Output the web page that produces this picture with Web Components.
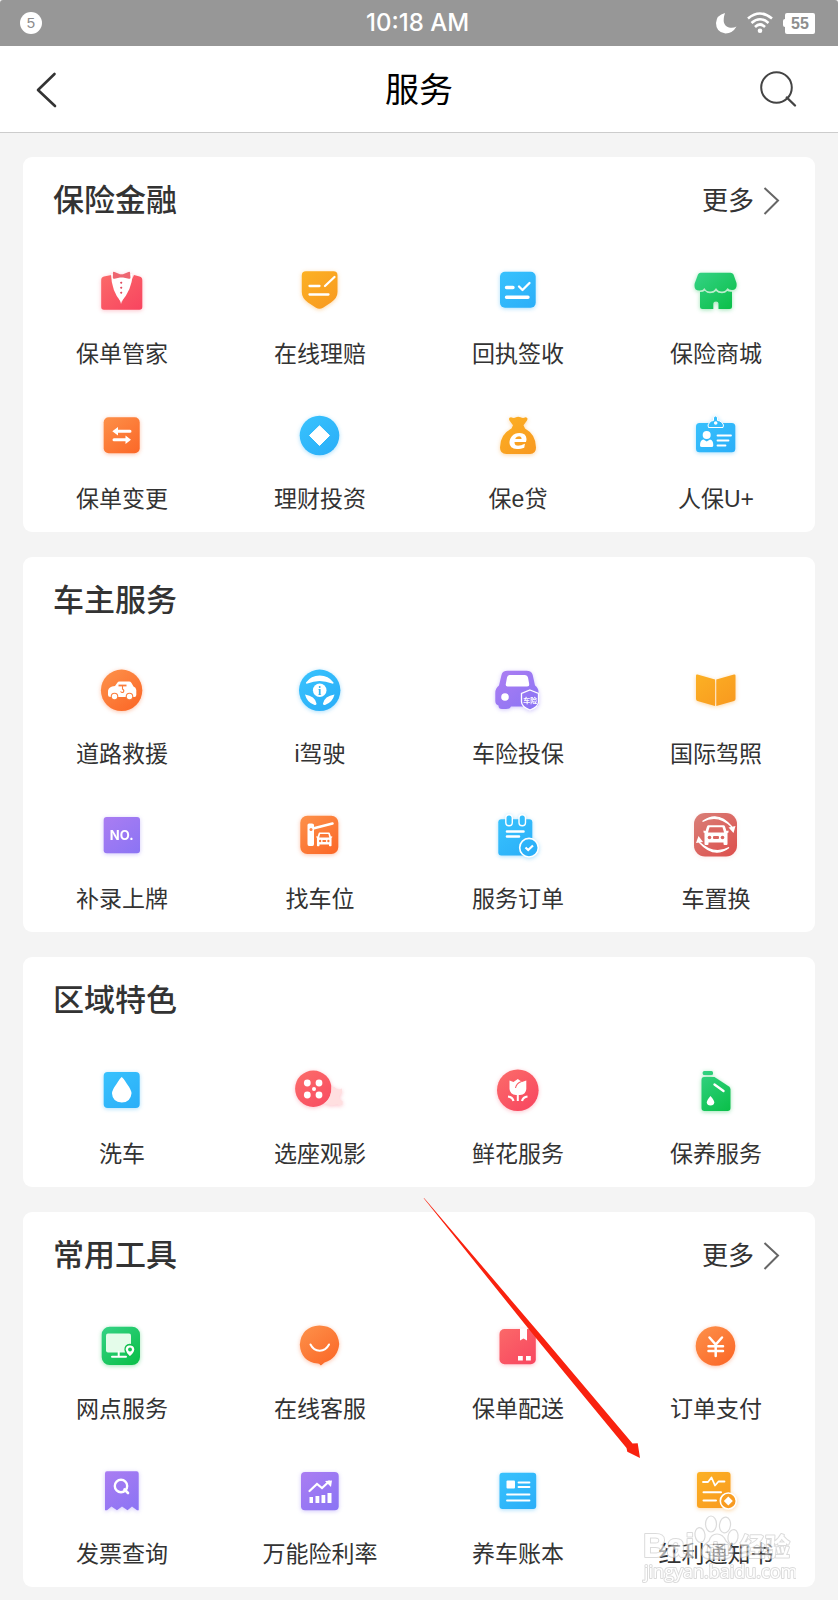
<!DOCTYPE html>
<html lang="zh-CN">
<head>
<meta charset="utf-8">
<meta name="viewport" content="width=device-width, initial-scale=1">
<title>服务</title>
<style>
  body {
    margin: 0;
    min-height: 100vh;
    background: #f4f4f4;
    color: #333;
    font-family: "Liberation Sans", "Noto Sans CJK SC", sans-serif;
  }
</style>
</head>
<body>
<service-page>
  <status-bar slot="status" time="10:18 AM" notices="5" battery="55"></status-bar>
  <nav-header slot="nav">服务</nav-header>

  <service-card heading="保险金融" more>
    <service-item icon="shirt">保单管家</service-item>
    <service-item icon="shield">在线理赔</service-item>
    <service-item icon="receipt">回执签收</service-item>
    <service-item icon="store">保险商城</service-item>
    <service-item icon="exchange">保单变更</service-item>
    <service-item icon="diamond">理财投资</service-item>
    <service-item icon="bag">保e贷</service-item>
    <service-item icon="badge">人保U+</service-item>
  </service-card>

  <service-card heading="车主服务">
    <service-item icon="rescue">道路救援</service-item>
    <service-item icon="wheel">i驾驶</service-item>
    <service-item icon="carshield">车险投保</service-item>
    <service-item icon="book">国际驾照</service-item>
    <service-item icon="plate">补录上牌</service-item>
    <service-item icon="parking">找车位</service-item>
    <service-item icon="order">服务订单</service-item>
    <service-item icon="swap">车置换</service-item>
  </service-card>

  <service-card heading="区域特色">
    <service-item icon="wash">洗车</service-item>
    <service-item icon="reel">选座观影</service-item>
    <service-item icon="flower">鲜花服务</service-item>
    <service-item icon="oil">保养服务</service-item>
  </service-card>

  <service-card heading="常用工具" more>
    <service-item icon="branch">网点服务</service-item>
    <service-item icon="smile">在线客服</service-item>
    <service-item icon="delivery">保单配送</service-item>
    <service-item icon="yen">订单支付</service-item>
    <service-item icon="invoice">发票查询</service-item>
    <service-item icon="chart">万能险利率</service-item>
    <service-item icon="ledger">养车账本</service-item>
    <service-item icon="dividend">红利通知书</service-item>
    <pointer-arrow slot="overlay"></pointer-arrow>
    <water-mark slot="overlay"></water-mark>
  </service-card>
</service-page>

<script>
const define = (name, html, fill) => customElements.define(name, class extends HTMLElement {
  constructor() {
    super();
    const template = document.createElement('template');
    template.innerHTML = html;
    this.attachShadow({ mode: 'open' }).append(template.content.cloneNode(true));
  }
  connectedCallback() { if (fill) fill(this, this.shadowRoot); }
});

/* Colour pairs: gradient start, gradient end, glow */
const HUES = {
  red: ['#fb6a69', '#f84660', '#f8466055'],
  yellow: ['#fcb124', '#f8981f', '#f8981f66'],
  blue: ['#38c2fd', '#2aaef8', '#2aaef866'],
  green: ['#34d284', '#0abf48', '#0abf4866'],
  orange: ['#fd9049', '#fb6727', '#fb672766'],
  purple: ['#aa7df2', '#8b74f4', '#8b74f466'],
  brick: ['#d97b74', '#dd524f', '#dd524f22']
};

/* Glyphs on a 60 by 60 grid; G is the icon's gradient */
const G = 'url(#g)';
const square = (x, y, w, h, r) => `<rect x="${x}" y="${y}" width="${w}" height="${h}" rx="${r}" fill="${G}"/>`;
const frontCar = (x, y, w, h, fg, bg) => `
  <svg x="${x}" y="${y}" width="${w}" height="${h}" viewBox="0 0 26 21" preserveAspectRatio="none">
    <path d="M5.500 0.800H20.500Q21.500 0.800 22 2L23.500 6.500L25.500 6V8L24.500 8.500V19.500Q24.500 20.500 23.500 20.500H21.500Q20.500 20.500 20.500 19.500V18H5.500V19.500Q5.500 20.500 4.500 20.500H2.500Q1.500 20.500 1.500 19.500V8.500L0.500 8V6L2.500 6.500L4 2Q4.500 0.800 5.500 0.800Z" fill="${fg}"/>
    <path d="M6.500 2.800H19.500L21 8H5Z" fill="${bg}"/>
    <circle cx="6.500" cy="13" r="1.800" fill="${bg}"/><circle cx="19.500" cy="13" r="1.800" fill="${bg}"/>
    <rect x="10" y="11.500" width="6" height="3" rx="1" fill="${bg}"/>
  </svg>`;

const ICONS = {
  shirt: ['red', `
    <path d="M12 16.500L19.500 15L29 44L42 15L47.500 16.500Q50.300 17.300 50.300 20V47Q50.300 49.800 47.500 49.800H12Q9.200 49.800 9.200 47V20Q9.200 17.200 12 16.500Z" fill="${G}"/>
    <path d="M19 14L40.500 14Q40 30 29 42Q19.500 31 19 14Z" fill="#fff"/>
    <path d="M21 12.500Q21 11.500 22.500 12L28 14.200H31L36.500 12Q38 11.500 38 12.500L38.500 17.500Q38.500 19.200 37 18.700L31 17.500H28L22.500 18.700Q20.800 19 20.800 17.500Z" fill="#ee6570"/>
    <path d="M29.200 21.500l1.300 1.300-1.300 1.300-1.300-1.300zM29.200 26.500l1.300 1.300-1.300 1.300-1.300-1.300zM29.200 31.500l1.300 1.300-1.300 1.300-1.300-1.300z" fill="#e0455a"/>`],
  shield: ['yellow', `
    <path d="M16 11.300H43.500Q47.500 11.300 47.500 15.500V32Q47.500 38 41 42.500L33 47.700Q29.500 50 26 47.700L18 42.500Q11.800 38 11.800 32V15.500Q11.800 11.300 16 11.300Z" fill="${G}"/>
    <path d="M19.500 26H29.500M35 26L44.500 17M19.500 34.500H38.500" stroke="#fff" stroke-width="2.300" stroke-linecap="round"/>`],
  receipt: ['blue', square(12, 11.7, 35.7, 36, 5) + `
    <path d="M18.500 27.500H25M18.500 37.300H40" stroke="#fff" stroke-width="3.400" stroke-linecap="round"/>
    <path d="M31 26.500L34.500 30L41.500 23" fill="none" stroke="#fff" stroke-width="2.300" stroke-linecap="round" stroke-linejoin="round"/>`],
  store: ['green', `
    <path d="M14.500 12.800H44.500Q46.500 12.800 47.500 14.500L50.500 23Q51.500 30 46 30Q43 30 41.500 28Q39.500 31.500 36 31.500Q32 31.500 30 28Q28 31.500 24 31.500Q20 31.500 18.500 28Q17 30.500 13.500 30.500Q7.500 30.500 8.700 23.500L12 14.500Q12.800 12.800 14.500 12.800Z" fill="${G}"/>
    <path d="M14 32Q17.500 32 18.800 30.800Q21 33.300 24 33.300Q28 33.300 30 31Q32 33.300 36 33.300Q39.500 33.300 41.200 31Q43 32 46 31.700V46.500Q46 49 43.500 49H32.500V43.500Q32.500 41.500 30 41.500Q27.300 41.500 27.300 43.500V49H16.500Q14 49 14 46.500Z" fill="${G}"/>`],
  exchange: ['orange', square(11.7, 12.3, 36, 36, 5) + `
    <path d="M24.500 26.300H38M22 34.700H35" stroke="#fff" stroke-width="3"  stroke-linecap="round"/>
    <path d="M20.300 26.300L26 22V30.500ZM39 34.700L33.500 30.500V39Z" fill="#fff"/>`],
  diamond: ['blue', `<circle cx="29.500" cy="30.500" r="19.800" fill="${G}"/><path d="M29.500 20.800L39.500 30.500L29.500 40.500L19.500 30.500Z" fill="#fff" stroke="#fff" stroke-linejoin="round"/>`],
  bag: ['yellow', `
    <path d="M23 12.300Q26 13.800 28 12.300Q30 11 32.500 12.300Q35 13.500 37.500 12.300Q40.500 12.500 39 15.500L35.500 20.200L37 23.500Q48 29.500 48 42.500Q48 49 42 49H18.500Q12 49 12 42.500Q12 29.500 23.500 23.500L25 20.200L21.500 15.500Q20 12.500 23 12.300Z" fill="${G}"/>
    <text x="30" y="44" font-family="DejaVu Sans" font-size="28" font-weight="700" font-style="italic" text-anchor="middle" fill="#fff">e</text>`],
  badge: ['blue', square(10, 18, 39.300, 29.300, 3.5) + `
    <path d="M22.500 22.500Q21 20 23.500 17.500Q25.500 15.500 27.500 15.500V13Q27.500 11 29.500 11Q31.500 11 31.500 13V15.500Q34 15.500 36 17.500Q38.500 20 37 22.500Z" fill="${G}" stroke="#fff" stroke-width="1"/>
    <circle cx="29.700" cy="18" r="1.800" fill="#fff"/><circle cx="20.700" cy="30" r="4" fill="#fff"/>
    <path d="M14 40.500Q14 35 17.500 34.500L20.700 36.500L24 34.500Q27.300 35 27.300 40.500Q27.300 42 25.500 42H16Q14 42 14 40.500Z" fill="#fff"/>
    <path d="M31.500 30.500H45M31.500 35.500H42.500M31.500 40.500H39.500" stroke="#fff" stroke-width="1.800" stroke-linecap="round"/>`],
  rescue: ['orange', `<circle cx="29.600" cy="30.300" r="20.700" fill="${G}"/>
    <path d="M16 32.500Q15.500 28 20 26.500L23 26L25.500 22.500Q26 21.600 27.500 21.600H37Q38.500 21.600 39.500 23L41.500 26.500Q44 27 44.300 30V35Q44.300 37 42.500 37H18.500Q16 37 16 35Z" fill="#fff"/>
    <circle cx="22.500" cy="36.500" r="3.800" fill="#fb7d3b"/><circle cx="22.500" cy="36.500" r="2.700" fill="#fff"/>
    <circle cx="37.500" cy="36.500" r="3.800" fill="#fb7d3b"/><circle cx="37.500" cy="36.500" r="2.700" fill="#fff"/>
    <path d="M26.500 25.500H34.500" stroke="#fb7d3b" stroke-width="1.800"/>
    <path d="M30.500 26V29Q32.500 30 31.500 32Q30 33.200 28.500 31.500" fill="none" stroke="#fb7d3b" stroke-width="1.100"/>`],
  wheel: ['blue', `<circle cx="29.700" cy="30.300" r="20.700" fill="${G}"/>
    <path d="M16 22.500Q21 15.500 29.700 15.500Q38.500 15.500 43.500 22.500Q44 24 42 23.500Q29.500 18.500 17.500 23.500Q15.500 24 16 22.500Z" fill="#fff"/>
    <path d="M15 34.500Q25 36 26.500 43.500Q26.500 45.500 24.500 45Q17 42.500 15 34.500ZM44.500 34.500Q34.500 36 33 43.500Q33 45.500 35 45Q42.500 42.500 44.500 34.500Z" fill="#fff"/>
    <circle cx="29.700" cy="30.300" r="6.800" fill="#fff"/>
    <text x="29.700" y="34.500" font-family="Liberation Serif" font-size="12" font-weight="700" text-anchor="middle" fill="#32b4ee">i</text>`],
  carshield: ['purple', `
    <path d="M19.500 10.800H38.500Q43.500 10.800 44.700 15L47 25.500Q50.500 28 50.500 32V44Q50.500 46.500 46 46.500H23Q22 49 18 49H14Q10.500 49 10.500 45.500Q7.300 44.500 7.300 41V33Q7.300 28 11 25.500L13.500 15Q14.500 10.800 19.500 10.800Z" fill="${G}"/>
    <path d="M21.500 15H37Q39.500 15 40 17.500L41.200 24Q41.500 26.500 39 26.500H19.500Q17.300 26.500 17.800 24L19 17.500Q19.500 15 21.500 15Z" fill="#fff"/>
    <circle cx="17" cy="37" r="3.800" fill="#fff"/>
    <path d="M42 30L50.500 33.500V42Q50.500 46.500 42 50Q33.500 46.500 33.500 42V33.500Z" fill="${G}" stroke="#fff" stroke-width="1.300"/>
    <text x="42.300" y="42.500" font-family="Noto Sans CJK SC" font-size="7" font-weight="700" text-anchor="middle" fill="#fff">车险</text>`],
  book: ['yellow', `<path d="M11.500 14.500L29 19.500V46L11.500 41Q10 40.500 10 39V15.500Q10 14 11.500 14.500ZM48 14.500L30.300 19.500V46L48 41Q49.500 40.500 49.500 39V15.500Q49.500 14 48 14.500Z" fill="${G}"/>`],
  plate: ['purple', square(11.7, 12, 36.3, 36.3, 3) + `
    <text x="29.700" y="35" font-family="Inter" font-size="13" font-weight="700" text-anchor="middle" fill="#fff">NO.</text>`],
  parking: ['orange', square(10.3, 10.7, 38, 38.3, 7) + `
    <path d="M17.500 20Q17.500 18.500 19 18.500H22Q24 18.500 24 20V39Q24 41 22.500 41H19Q17.500 41 17.500 39Z" fill="#fff"/>
    <path d="M21 24L42.500 18.500" stroke="#fff" stroke-width="2.600" stroke-linecap="round"/>
    <circle cx="21" cy="24.500" r="1.500" fill="#fd8748"/>` + frontCar(26, 27, 16.500, 14.500, '#fff', '#fb7938')],
  order: ['blue', square(10.3, 14.3, 34, 36.300, 3) + `
    <rect x="17.800" y="9.800" width="6.500" height="11" rx="3.200" fill="${G}" stroke="#fff" stroke-width="1.400"/>
    <rect x="31" y="9.800" width="6.500" height="11" rx="3.200" fill="${G}" stroke="#fff" stroke-width="1.400"/>
    <path d="M19 26.500H35.500M19 31.500H31" stroke="#fff" stroke-width="2.600" stroke-linecap="round"/>
    <circle cx="41" cy="42.700" r="9.300" fill="${G}" stroke="#fff" stroke-width="1.600"/>
    <path d="M37.500 42.500L40.200 45L45 40.500" fill="none" stroke="#fff" stroke-width="2.200"/>`],
  swap: ['brick', square(8, 8, 43, 43.5, 11) + frontCar(17, 19.500, 26, 21, '#fff', '#da6661') + `
    <path d="M16.500 16.500Q32 5 46 22Q32 8 16.500 16.500Z" fill="#fff" stroke="#fff" stroke-width="1.200"/><path d="M49.500 21L47.500 28L42.500 22.500Z" fill="#fff"/>
    <path d="M43 42.500Q28 54 13 37Q28 51 43 42.500Z" fill="#fff" stroke="#fff" stroke-width="1.200"/><path d="M10 38L12.500 31L17 37Z" fill="#fff"/>`],
  wash: ['blue', square(11.7, 12, 36, 36, 4) + `
    <path d="M29.700 17Q31 17.500 35 24Q39.500 30 39.500 33.500Q38.500 42.500 29.700 42.500Q20.500 42 20 33.500Q20 30 24.500 24Q28.500 17.500 29.700 17Z" fill="#fff"/>`],
  reel: ['red', `<circle cx="23.300" cy="28.700" r="18.200" fill="${G}"/>
    <g fill="#fff"><circle cx="17.300" cy="23" r="3.400"/><circle cx="29" cy="23" r="3.400"/><circle cx="17.300" cy="35" r="3.400"/><circle cx="29" cy="35" r="3.400"/><circle cx="24" cy="29" r="2"/></g>
    <path d="M34.500 43.500Q41.500 38 41.500 26.500Q44 26 46 28.500Q49 30.500 52 28.500V33Q48.500 35.500 49.500 38.500Q51 40.500 52.500 41V44.500Q50 46 47 44.500Q40 46.500 34.500 43.500Z" fill="#ffdfe0"/>`],
  flower: ['red', `<circle cx="29.800" cy="30.200" r="20.800" fill="${G}"/>
    <path d="M21.500 20.500L25.500 22L29.800 19L34 22L38.300 20.500V29Q38 34.500 32 35H28Q22 34.500 21.500 29Z" fill="#fff"/>
    <path d="M33.500 21.500Q28.500 23 27.500 28" fill="none" stroke="#fa5f68" stroke-width="1.100"/>
    <path d="M29.800 34V41" stroke="#fff" stroke-width="2"/>
    <path d="M20 36.500Q24.500 37 25.500 41M39.500 36.500Q35 37 34 41" fill="none" stroke="#fff" stroke-width="2.200"/>`],
  oil: ['green', square(16.7, 11, 10.300, 4, 1.500) + `
    <path d="M18 17H28.500L43 26.500Q44.500 27.500 44.500 29.500V48Q44.500 51 41.500 51H18.500Q15.500 51 15.500 48V20Q15.500 17 18 17Z" fill="${G}"/>
    <path d="M28.500 24.500L37.500 31" stroke="#fff" stroke-width="2.400" stroke-linecap="round"/>
    <path d="M24.500 36Q28.300 40 28.300 42.500Q28 45.500 24.500 45.500Q21 45.500 20.800 42.500Q20.800 40 24.500 36Z" fill="#fff"/>`],
  branch: ['green', square(9.7, 11.7, 38.3, 38.3, 8) + `
    <rect x="14" y="18.500" width="25" height="19" rx="2" fill="#e4fcea"/>
    <path d="M26.700 37V41.500M20 41.700H34" stroke="#fff" stroke-width="2" stroke-linecap="round"/>
    <path d="M37.800 29.500Q43 30 43 34.700Q42.500 38.500 37.800 42Q33.500 38.500 33 34.700Q33 30 37.800 29.500Z" fill="#fff" stroke="#12c04f" stroke-width="1.300"/>
    <circle cx="38" cy="34.500" r="1.900" fill="#12c04f"/>`],
  smile: ['orange', `
    <path d="M29.500 10.500Q47.500 11 49.200 29Q48 43 34.500 47.500L31.500 50Q30.300 51 29.500 49L28 48.500Q11 47 9.800 29.500Q11.500 11.500 29.500 10.500Z" fill="${G}"/>
    <path d="M20.500 29.500Q23.500 35.500 29.700 35.700Q36 35.500 39 29.500" fill="none" stroke="#fff" stroke-width="2" stroke-linecap="round"/>`],
  delivery: ['red', square(11.5, 14, 36.3, 35.3, 5) + `
    <path d="M32 13.500H39V25.500L35.500 23.500L32 25.500Z" fill="#fff"/>
    <rect x="30" y="41" width="4.800" height="4.500" fill="#fff"/><rect x="38" y="41" width="4.800" height="4.500" fill="#fff"/>`],
  yen: ['orange', `<circle cx="29.500" cy="31" r="19.800" fill="${G}"/>
    <path d="M23.500 22.500L29.700 29.500L36 22.500M29.700 29.500V41M22.500 31.200H37M22.500 36H37" fill="none" stroke="#fff" stroke-width="2.500" stroke-linecap="round"/>`],
  invoice: ['purple', `
    <path d="M15 11.200H44.500Q46.700 11.200 46.700 13.500V50.300H45L40 46.500L35.500 50.300L30 46.500L25 50.300L19.500 46.500L15 50.300H13V13.500Q13 11.200 15 11.200Z" fill="${G}"/>
    <circle cx="29" cy="26" r="6.200" fill="none" stroke="#fff" stroke-width="2.400"/><path d="M32.500 29.500L36 33" stroke="#fff" stroke-width="2.600" stroke-linecap="round"/>`],
  chart: ['purple', square(11, 12, 37.7, 38.3, 4) + `
    <path d="M19.500 31L27 24L32 28L39 21.500" fill="none" stroke="#fff" stroke-width="2.200" stroke-linecap="round"/>
    <path d="M35 21L42 20.500L41 27Z" fill="#fff"/>
    <path d="M19.500 37H23V43H19.500ZM25.500 36H29.300V43H25.500ZM31.500 35H35.300V43H31.500ZM37.500 33H41.500V43H37.500Z" fill="#fff"/>`],
  ledger: ['blue', square(11.5, 12.7, 36.7, 36.3, 3) + `
    <rect x="18.500" y="20.500" width="8.500" height="8" rx="1" fill="#fff"/>
    <path d="M30.500 22.500H41.500M30.500 27H41.500M19 34.500H41.500M19 40.500H41.500" stroke="#fff" stroke-width="1.800" stroke-linecap="round"/>`],
  dividend: ['yellow', square(11, 12, 33.5, 36, 3) + `
    <path d="M17 22H22L25.500 17.500L29 25.500L32.500 21.500H38.500" fill="none" stroke="#fff" stroke-width="1.800" stroke-linecap="round" stroke-linejoin="round"/>
    <path d="M17.500 32.200H35M17.500 40.500H30" stroke="#fff" stroke-width="2" stroke-linecap="round"/>
    <circle cx="42.300" cy="41" r="8" fill="${G}" stroke="#fff" stroke-width="1.600"/>
    <path d="M42.300 36.500L46.800 41L42.300 45.500L37.800 41Z" fill="#fff"/>`]
};

define('app-icon', `
  <style>
    :host { display: block; width: 60px; height: 60px; }
    svg { display: block; overflow: visible; }
  </style>`, (host, root) => {
  const icon = ICONS[host.getAttribute('name')];
  if (!icon || root.querySelector('svg')) return;
  const [hue, art] = icon;
  const [from, to, glow] = HUES[hue];
  root.innerHTML += `
    <svg width="60" height="60" viewBox="0 0 60 60" aria-hidden="true">
      <defs><linearGradient id="g" gradientUnits="userSpaceOnUse" x1="14" y1="10" x2="46" y2="50">
        <stop stop-color="${from}"/><stop offset="1" stop-color="${to}"/></linearGradient></defs>
      <g style="filter: drop-shadow(0 1px 2px ${glow})">${art}</g>
    </svg>`;
});

define('status-bar', `
  <style>
    :host { display: grid; grid-template-columns: 1fr auto 1fr; align-items: center; height: 46px; padding: 0 23px 0 20px;
      background: #979797; color: #fff; border-radius: 3px 3px 0 0; box-sizing: border-box; }
    .notices { width: 22px; border-radius: 50%; background: #fff; color: #8d8d8d; font-size: 15px; line-height: 22px; text-align: center; }
    .time { font: 500 24px/28px Inter, sans-serif; }
    .right { display: flex; justify-content: flex-end; align-items: center; gap: 10px; }
    svg { display: block; }
    .battery { display: flex; align-items: center; }
    .battery::before { content: ""; width: 2px; height: 8px; border-radius: 2px 0 0 2px; background: #fff; }
    .level { width: 30px; border-radius: 2px; background: #fff; color: #8d8d8d; font-size: 16px; font-weight: 700; line-height: 21px; text-align: center; }
  </style>
  <div class="notices"></div>
  <div class="time"></div>
  <div class="right">
    <svg width="22" height="22" viewBox="0 0 22 22" aria-hidden="true"><path d="M10 1Q6 13 14 15.500Q18 16.500 21.500 14.500Q17.500 21.500 10.500 21.500Q1 20.500 1 11Q1.500 3 10 1Z" fill="#fff"/></svg>
    <svg width="26" height="22" viewBox="0 0 26 22" aria-hidden="true"><g fill="none" stroke="#fff" stroke-width="2.600"><path d="M1 6.500Q13 -3.500 25 6.500M4.500 11Q13 3.500 21.500 11M8 15Q13 10 18 15"/></g><circle cx="13" cy="18.700" r="2.300" fill="#fff"/></svg>
    <div class="battery"><div class="level"></div></div>
  </div>`, (host, root) => {
  root.querySelector('.notices').textContent = host.getAttribute('notices');
  root.querySelector('.time').textContent = host.getAttribute('time');
  root.querySelector('.level').textContent = host.getAttribute('battery');
});

define('nav-header', `
  <style>
    :host { display: grid; grid-template-columns: 1fr auto 1fr; align-items: center; height: 87px; padding: 0 32px;
      background: #fff; border-bottom: 1px solid #ccc; box-sizing: border-box; }
    h1 { margin: 0; padding-top: 2px; color: #000; font-size: 34px; font-weight: 400; line-height: 48px; }
    button { display: block; padding: 0; border: 0; background: none; cursor: pointer; }
    .search { justify-self: end; }
    svg { display: block; }
  </style>
  <button type="button" aria-label="返回"><svg width="40" height="40" viewBox="0 0 40 40"><path d="M22.500 5L6 21L23 37" fill="none" stroke="#333" stroke-width="2.600" stroke-linecap="round" stroke-linejoin="round"/></svg></button>
  <h1><slot></slot></h1>
  <button type="button" class="search" aria-label="搜索"><svg width="48" height="40" viewBox="0 0 48 40"><circle cx="18.500" cy="18.500" r="15.300" fill="none" stroke="#444" stroke-width="2"/><path d="M28.800 28.500L37 36.500" stroke="#444" stroke-width="2.400" stroke-linecap="round"/></svg></button>`);

define('service-item', `
  <style>
    :host { display: block; min-width: 0; }
    a { display: flex; flex-direction: column; align-items: center; gap: 18px; color: inherit; text-decoration: none; }
    span { font-size: 23px; line-height: 32px; white-space: nowrap; }
  </style>
  <a href="#"><span><slot></slot></span></a>`, (host, root) => {
  if (root.querySelector('app-icon')) return;
  const icon = document.createElement('app-icon');
  icon.setAttribute('name', host.getAttribute('icon'));
  root.querySelector('a').prepend(icon);
});

define('service-card', `
  <style>
    :host { display: block; position: relative; padding: 16px 0 17px; border-radius: 9px; background: #fff; }
    header { display: flex; justify-content: space-between; align-items: center; padding: 0 35px 0 30px; }
    h2 { margin: 0; font-size: 31px; font-weight: 500; line-height: 56px; }
    a { display: flex; align-items: center; gap: 8px; color: inherit; font-size: 26px; line-height: 40px; text-decoration: none; }
    a[hidden] { display: none; }
    svg { display: block; }
    .grid { display: grid; grid-template-columns: repeat(4, minmax(0, 1fr)); row-gap: 35px; margin-top: 31px; }
  </style>
  <header>
    <h2></h2>
    <a href="#" hidden>更多<svg width="18" height="30" viewBox="0 0 18 30" aria-hidden="true"><path d="M2.500 2L16 14.500L2.500 28" fill="none" stroke="#666" stroke-width="2"/></svg></a>
  </header>
  <div class="grid"><slot></slot></div>
  <slot name="overlay"></slot>`, (host, root) => {
  root.querySelector('h2').textContent = host.getAttribute('heading');
  root.querySelector('a').hidden = !host.hasAttribute('more');
});

/* Red pointer that ends above the last tool */
define('pointer-arrow', `
  <style>
    :host { position: absolute; right: 174px; bottom: 128px; pointer-events: none; }
    svg { display: block; }
  </style>
  <svg width="218" height="261" viewBox="0 0 218 261" aria-hidden="true"><path d="M0.500 0L1.500 0.500L121.300 141L209.500 245.500L214.700 245.300L217 260L204.300 253.800L203.500 250L116.800 144.800Z" fill="#f9220f"/></svg>`);

define('water-mark', `
  <style>
    :host { position: absolute; right: 19px; bottom: 0; pointer-events: none; }
    svg { display: block; }
    text { paint-order: stroke; stroke: #c4c4c4; stroke-width: 2px; stroke-linejoin: round; fill: #fff; }
  </style>
  <svg width="154" height="80" viewBox="0 0 154 80">
    <g opacity="0.6">
      <text x="1" y="50" font-family="Liberation Sans" font-size="33" font-weight="700">Bai</text>
      <g fill="#fff" stroke="#c4c4c4" stroke-width="1.200">
        <ellipse cx="58" cy="28" rx="5" ry="7.500" transform="rotate(-8 58 28)"/>
        <ellipse cx="69" cy="17" rx="5.500" ry="8"/>
        <ellipse cx="83" cy="18" rx="5.500" ry="8" transform="rotate(8 83 18)"/>
        <ellipse cx="91" cy="30" rx="5" ry="7.500" transform="rotate(10 91 30)"/>
        <path d="M75 27Q81 27 84 34Q92 41 91 46Q89 54 75 52Q61 54 59 46Q59 40 67 34Q69 27 75 27Z"/>
      </g>
      <text x="65" y="48" font-family="Liberation Sans" font-size="18" font-weight="700">du</text>
      <text x="98" y="49" font-family="Noto Sans CJK SC" font-size="25" font-weight="700">经验</text>
      <text x="2" y="71" font-family="Open Sans" font-size="18">jingyan.baidu.com</text>
    </g>
  </svg>`);

define('service-page', `
  <style>
    :host { display: block; }
    main { display: flex; flex-direction: column; gap: 25px; padding: 24px 23px 13px; }
  </style>
  <slot name="status"></slot>
  <slot name="nav"></slot>
  <main><slot></slot></main>`);
</script>
</body>
</html>
